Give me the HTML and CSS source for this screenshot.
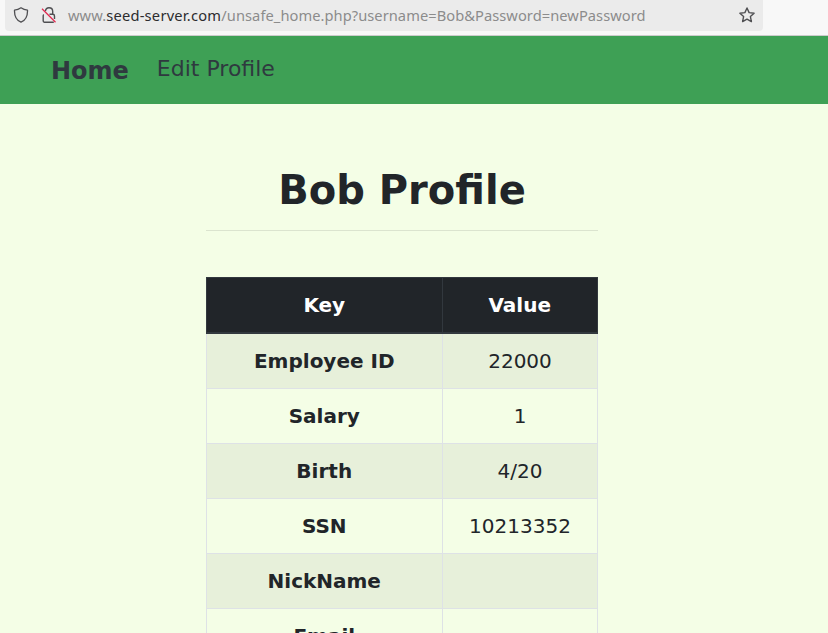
FILE: index.html
```html
<!DOCTYPE html>
<html lang="en">
<head>
<meta charset="utf-8">
<title>Bob Profile</title>
<link rel="stylesheet" href="styles.css">
</head>
<body>
<div class="toolbar">
  <div class="urlbar">
    <svg class="shield" width="16" height="16" viewBox="0 0 16 16" fill="none" stroke="#4f4f52" stroke-width="1.3" stroke-linejoin="round"><path d="M8 .8C6.200 2.100 3.900 3 1.500 3.200c-.2 5.500 1.500 10 6.500 12 5-2 6.700-6.500 6.500-12C12.100 3 9.800 2.100 8 .8Z"/></svg>
    <svg class="lock" width="16" height="16" viewBox="0 0 16 16" fill="none" stroke="#4f4f52" stroke-width="1.400"><path d="M4.400 4.100C4.700 2.100 6 .8 8 .8c2.200 0 3.700 1.500 3.700 3.700v2.700c1.200 0 1.800.6 1.800 1.700v3M8.500 7.200h3.200M2.800 7.500c-.5.300-.6.700-.6 1.300v5.300c0 .7.400 1.100 1.100 1.100h9.500"/><path stroke="#e22850" stroke-width="1.300" d="m1 1.800 13.500 13.400"/></svg>
    <span class="url">www.<b>seed-server.com</b>/unsafe_home.php?username=Bob&amp;Password=newPassword</span>
    <svg class="star" width="16" height="16" viewBox="0 0 16 16" fill="none" stroke="#4f4f52" stroke-width="1.400" stroke-linejoin="round"><path d="m8 1 2.100 4.600 5 .6-3.700 3.400 1 5L8 12.100l-4.400 2.500 1-5L.9 6.200l5-.6Z"/></svg>
  </div>
</div>
<nav class="navbar"><a class="home">Home</a><a class="edit">Edit Profile</a></nav>
<main class="profile">
  <h1>Bob Profile</h1>
  <hr>
  <table>
    <thead><tr><th>Key</th><th>Value</th></tr></thead>
    <tbody>
      <tr><th>Employee ID</th><td>22000</td></tr>
      <tr><th>Salary</th><td>1</td></tr>
      <tr><th>Birth</th><td>4/20</td></tr>
      <tr><th>SSN</th><td>10213352</td></tr>
      <tr><th>NickName</th><td></td></tr>
      <tr><th>Email</th><td></td></tr>
    </tbody>
  </table>
</main>
</body>
</html>
```
FILE: styles.css
```css
* { box-sizing: border-box; }
body { margin: 0; height: 633px; overflow: hidden; background: #f4fee6; color: #212529; font: 20px/30px "DejaVu Sans", sans-serif; }
.toolbar { height: 36px; background: #f8f8f8; border-bottom: 1px solid #ccc; }
.urlbar { width: 758px; height: 31px; margin-left: 5px; padding: 0 8px 1px; background: #ebebeb; border-radius: 0 0 4px 4px; display: flex; align-items: center; }
.lock { margin-left: 12px; }
.url { margin-left: 11px; font: 14.670px/20px "Noto Sans", sans-serif; letter-spacing: .055px; color: #8c8c8c; white-space: nowrap; }
.url b { font-weight: 400; letter-spacing: .24px; color: #2c2c2e; }
.star { margin-left: auto; }
.navbar { height: 68px; padding-left: 51px; background: #3ea055; display: flex; align-items: center; color: #2f393f; }
.home { padding-top: 2px; font-size: 24px; font-weight: 700; }
.edit { margin-left: 28px; padding-bottom: 2px; font-size: 22px; }
.profile { width: 392px; margin: 61px 0 0 206px; }
h1 { margin: 0; font-size: 40px; line-height: 50px; text-align: center; }
hr { margin: 15px 0 46px; border: 0; border-top: 1px solid #dbe4cf; }
table { width: 392px; table-layout: fixed; border-collapse: collapse; text-align: center; }
th, td { height: 55px; padding: 0; border: 1px solid #dee2e6; }
th:first-child { width: 236px; }
th { padding-right: .5px; }
thead th { height: 55px; padding-top: 1px; background: #212529; color: #fff; border-color: #32383e; border-bottom-width: 2px; }
tbody tr:first-child th, tbody tr:first-child td { height: 56px; padding-top: 1px; }
tbody tr:nth-child(odd) { background: #e7f0da; }
```
